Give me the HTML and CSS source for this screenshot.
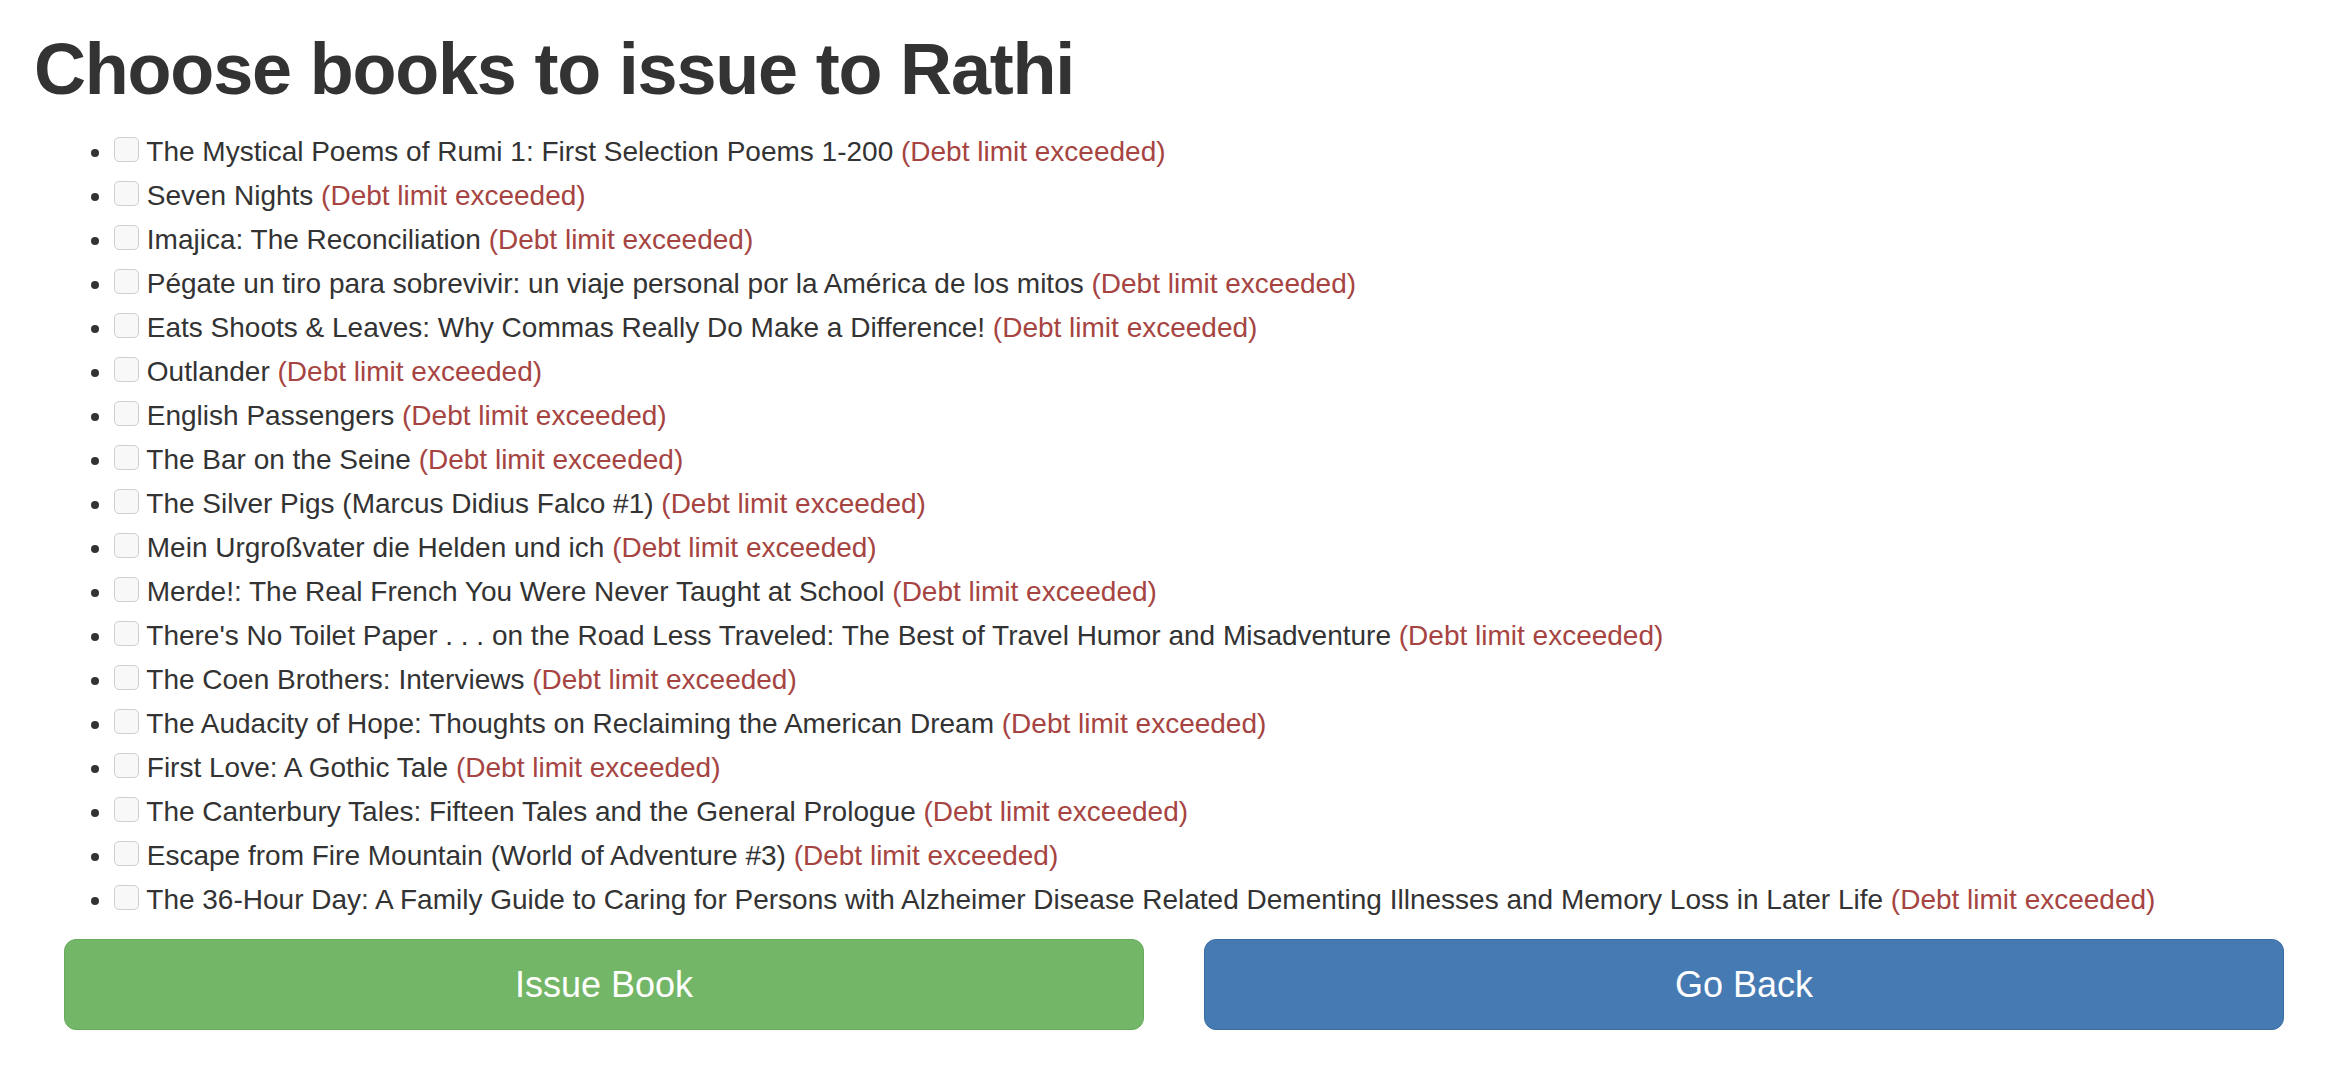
FILE: index.html
```html
<!DOCTYPE html>
<html>
<head>
<meta charset="utf-8">
<title>Issue books</title>
<link rel="stylesheet" href="styles.css">
</head>
<body>
<div class="page">
  <h1 class="title">Choose books to issue to Rathi</h1>
  <form class="issue-form">
    <ul class="book-list">
      <li><input type="checkbox" class="chk"> The Mystical Poems of Rumi 1: First Selection Poems 1-200 <span class="danger">(Debt limit exceeded)</span></li>
      <li><input type="checkbox" class="chk"> Seven Nights <span class="danger">(Debt limit exceeded)</span></li>
      <li><input type="checkbox" class="chk"> Imajica: The Reconciliation <span class="danger">(Debt limit exceeded)</span></li>
      <li><input type="checkbox" class="chk"> Pégate un tiro para sobrevivir: un viaje personal por la América de los mitos <span class="danger">(Debt limit exceeded)</span></li>
      <li><input type="checkbox" class="chk"> Eats Shoots &amp; Leaves: Why Commas Really Do Make a Difference! <span class="danger">(Debt limit exceeded)</span></li>
      <li><input type="checkbox" class="chk"> Outlander <span class="danger">(Debt limit exceeded)</span></li>
      <li><input type="checkbox" class="chk"> English Passengers <span class="danger">(Debt limit exceeded)</span></li>
      <li><input type="checkbox" class="chk"> The Bar on the Seine <span class="danger">(Debt limit exceeded)</span></li>
      <li><input type="checkbox" class="chk"> The Silver Pigs (Marcus Didius Falco #1) <span class="danger">(Debt limit exceeded)</span></li>
      <li><input type="checkbox" class="chk"> Mein Urgroßvater die Helden und ich <span class="danger">(Debt limit exceeded)</span></li>
      <li><input type="checkbox" class="chk"> Merde!: The Real French You Were Never Taught at School <span class="danger">(Debt limit exceeded)</span></li>
      <li><input type="checkbox" class="chk"> There's No Toilet Paper . . . on the Road Less Traveled: The Best of Travel Humor and Misadventure <span class="danger">(Debt limit exceeded)</span></li>
      <li><input type="checkbox" class="chk"> The Coen Brothers: Interviews <span class="danger">(Debt limit exceeded)</span></li>
      <li><input type="checkbox" class="chk"> The Audacity of Hope: Thoughts on Reclaiming the American Dream <span class="danger">(Debt limit exceeded)</span></li>
      <li><input type="checkbox" class="chk"> First Love: A Gothic Tale <span class="danger">(Debt limit exceeded)</span></li>
      <li><input type="checkbox" class="chk"> The Canterbury Tales: Fifteen Tales and the General Prologue <span class="danger">(Debt limit exceeded)</span></li>
      <li><input type="checkbox" class="chk"> Escape from Fire Mountain (World of Adventure #3) <span class="danger">(Debt limit exceeded)</span></li>
      <li><input type="checkbox" class="chk"> The 36-Hour Day: A Family Guide to Caring for Persons with Alzheimer Disease Related Dementing Illnesses and Memory Loss in Later Life <span class="danger">(Debt limit exceeded)</span></li>
    </ul>
    <div class="actions">
      <button type="button" class="btn btn-success">Issue Book</button>
      <button type="button" class="btn btn-primary">Go Back</button>
    </div>
  </form>
</div>
</body>
</html>
```
FILE: styles.css
```css
html, body {
  margin: 0;
  padding: 0;
  background: #fff;
}

body {
  font-family: "Liberation Sans", Arial, Helvetica, sans-serif;
  font-size: 28px;
  line-height: 44px;
  color: #333;
}

.page {
  padding: 0 30px;
}

.title {
  margin: 30px 0 21px;
  padding-left: 4px;
  font-size: 72px;
  line-height: 79px;
  font-weight: bold;
  letter-spacing: -1.2px;
  color: #333;
}

.book-list {
  margin: 0 0 17px;
  padding-left: 84px;
  list-style: disc;
}

.book-list li {
  line-height: 44px;
  white-space: nowrap;
}

.chk {
  -webkit-appearance: none;
  appearance: none;
  box-sizing: border-box;
  width: 25px;
  height: 25px;
  margin: 0;
  border: 1.5px solid #cfcfcf;
  border-radius: 5px;
  background: #f8f8f8;
  vertical-align: -1px;
}

.danger {
  color: #a64442;
}

.actions {
  display: flex;
  gap: 60px;
  padding: 0 32px 0 34px;
}

.btn {
  flex: 1;
  box-sizing: border-box;
  height: 91px;
  font-family: "Liberation Sans", Arial, Helvetica, sans-serif;
  font-size: 36px;
  line-height: 48px;
  color: #fff;
  border-radius: 12px;
  padding: 20px 24px;
  cursor: pointer;
}

.btn-success {
  background: #74b667;
  border: 1.5px solid #68ab5b;
}

.btn-primary {
  background: #467ab3;
  border: 1.5px solid #3a6ca1;
}
```
